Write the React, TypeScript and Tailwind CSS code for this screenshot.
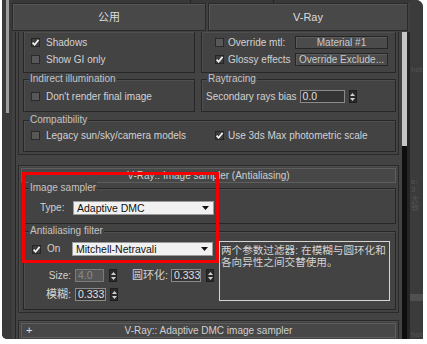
import React from "react";

const FONT = "font-[family-name:Liberation_Sans,Noto_Sans_CJK_SC,sans-serif]";

function Check({ on }: { on?: boolean }) {
  return (
    <span
      className={
        on
          ? "relative inline-block w-[9px] h-[9px] border border-[#262626] bg-[#3e3e3e] shrink-0"
          : "relative inline-block w-[9px] h-[9px] border border-[#2a2a2a] bg-[#585858] shrink-0"
      }
    >
      {on && (
        <svg viewBox="0 0 9 9" className="absolute -left-px -top-px w-[9px] h-[9px]">
          <path d="M1.6 4.6 L3.6 6.8 L7.6 1.9" stroke="#f2f2f2" strokeWidth="1.7" fill="none" />
        </svg>
      )}
    </span>
  );
}

function Spin() {
  return (
    <span className="flex flex-col items-center justify-center gap-[2px] w-[8px] h-[13px] bg-[#2b2b2b] border border-[#1e1e1e] shrink-0">
      <svg width="5" height="3" viewBox="0 0 5 3">
        <path d="M0 3 L2.5 0 L5 3Z" fill="#d0d0d0" />
      </svg>
      <svg width="5" height="3" viewBox="0 0 5 3">
        <path d="M0 0 L2.5 3 L5 0Z" fill="#d0d0d0" />
      </svg>
    </span>
  );
}

function Num({ v, w, dim }: { v: string; w: string; dim?: boolean }) {
  return (
    <span
      className={
        (dim
          ? "bg-[#565656] text-[#8c8c8c] border-[#7a7a7a] "
          : "bg-[#353535] text-[#e0e0e0] border-[#8a8a8a] ") +
        w +
        " h-[13px] border flex items-center pl-[2px] text-[10.5px] leading-none shrink-0 overflow-hidden"
      }
    >
      {v}
    </span>
  );
}

function Drop({ v }: { v: string }) {
  return (
    <span className="w-[141px] h-[14px] bg-[#f1f1f1] border border-[#9a9a9a] flex items-center pl-[3px] pr-[4px] text-[10.5px] leading-none text-[#111] shrink-0">
      <span className="flex-1">{v}</span>
      <svg width="7" height="4" viewBox="0 0 7 4">
        <path d="M0 0 L7 0 L3.5 4Z" fill="#111" />
      </svg>
    </span>
  );
}

function Btn({ v }: { v: string }) {
  return (
    <span className="w-[93px] h-[13px] bg-[#4b4b4b] border border-[#262626] shadow-[inset_1px_1px_0_#5c5c5c] flex items-center justify-center text-[10px] leading-none text-[#c9c9c9] shrink-0">
      {v}
    </span>
  );
}

function Group({
  label,
  className,
  children,
}: {
  label?: string;
  className: string;
  children?: React.ReactNode;
}) {
  return (
    <div className={"relative shrink-0 border border-[#272727] shadow-[inset_1px_1px_0_#4f4f4f] " + className}>
      {label && (
        <span className="absolute -top-[7px] left-[5px] px-[1px] bg-[#434343] text-[10px] leading-[12px] text-[#c4c4c4]">
          {label}
        </span>
      )}
      {children}
    </div>
  );
}

function Row({ children, className }: { children: React.ReactNode; className?: string }) {
  return <div className={"flex items-center h-[17px] " + (className ?? "")}>{children}</div>;
}

function Txt({ children, className }: { children: React.ReactNode; className?: string }) {
  return <span className={"text-[10px] leading-none text-[#d2d2d2] whitespace-nowrap " + (className ?? "")}>{children}</span>;
}

function RollHeader({ title, plus }: { title: string; plus?: boolean }) {
  return (
    <div className="relative shrink-0 mx-[2px] mt-[2px] h-[15px] bg-[#474747] border border-[#5e5e5e] flex items-center justify-center text-[10px] leading-none text-[#cfcfcf]">
      {plus && <span className="absolute left-[4px] top-[1px] text-[11px] leading-none text-[#e0e0e0]">+</span>}
      {title}
    </div>
  );
}

export default function App() {
  return (
    <div className={"relative w-[427px] h-[344px] bg-white pl-[2px] pr-[4px] pb-[5px] overflow-hidden " + FONT}>
      <div className="h-full flex bg-[#3c3c3c] rounded-tr-[7px] rounded-bl-[5px] overflow-hidden">
        {/* left strip */}
        <div className="w-[10px] shrink-0 h-full bg-[#3a3a3a] flex">
          <div className="ml-[4px] w-[3px] h-[113px] bg-[#9c9c9c]" />
        </div>

        {/* center column */}
        <div className="w-[398px] shrink-0 h-full flex flex-col bg-[#414141]">
          <div className="h-[3px] shrink-0 bg-[#383838] flex">
            <div className="ml-[178px] w-px h-full bg-[#222]" />
            <div className="ml-[82px] w-px h-full bg-[#222]" />
          </div>
          <div className="h-[28px] shrink-0 flex gap-[2px]">
            <div className="w-[194px] h-full bg-[#484848] border border-[#2a2a2a] shadow-[inset_1px_1px_0_#565656] flex items-center justify-center text-[11px] leading-none text-[#dcdcdc]">
              公用
            </div>
            <div className="w-[200px] h-full bg-[#484848] border border-[#2a2a2a] shadow-[inset_1px_1px_0_#565656] flex items-center justify-center text-[11px] leading-none text-[#dcdcdc]">
              V-Ray
            </div>
          </div>
          <div className="mt-px flex-1 min-h-0 flex overflow-hidden">
            {/* content */}
            <div className="w-[390px] h-full pl-[3px] bg-[#414141]">
              <div className="h-full flex flex-col border-l border-[#262626] pl-[2px] bg-[#434343]">
                {/* rollout 1 (scrolled) */}
                <div className="shrink-0 w-[381px] h-[123px] border-x border-b border-[#2a2a2a] pl-[4px] pr-[2px] pb-[2px] flex flex-col">
                  <div className="shrink-0 flex gap-[6px] h-[41px]">
                    <Group className="w-[172px] h-full border-t-0 pl-[7px] pt-[2px]">
                      <Row>
                        <Check on />
                        <Txt className="ml-[6px]">Shadows</Txt>
                      </Row>
                      <Row>
                        <Check />
                        <Txt className="ml-[6px]">Show GI only</Txt>
                      </Row>
                    </Group>
                    <Group className="w-[195px] h-full border-t-0 pl-[13px] pr-[7px] pt-[2px]">
                      <Row>
                        <Check />
                        <Txt className="ml-[4px]">Override mtl:</Txt>
                        <span className="ml-auto">
                          <Btn v="Material #1" />
                        </span>
                      </Row>
                      <Row>
                        <Check on />
                        <Txt className="ml-[4px]">Glossy effects</Txt>
                        <span className="ml-auto">
                          <Btn v="Override Exclude..." />
                        </span>
                      </Row>
                    </Group>
                  </div>
                  <div className="shrink-0 mt-[6px] flex gap-[6px] h-[33px]">
                    <Group label="Indirect illumination" className="w-[172px] h-full pl-[7px] pt-[8px]">
                      <Row>
                        <Check />
                        <Txt className="ml-[6px]">Don't render final image</Txt>
                      </Row>
                    </Group>
                    <Group label="Raytracing" className="w-[195px] h-full pl-[4px] pt-[8px]">
                      <Row>
                        <Txt>Secondary rays bias</Txt>
                        <span className="ml-[3px]">
                          <Num v="0.0" w="w-[45px]" />
                        </span>
                        <span className="ml-[4px]">
                          <Spin />
                        </span>
                      </Row>
                    </Group>
                  </div>
                  <Group label="Compatibility" className="mt-[8px] w-[373px] h-[32px] pl-[7px] pt-[6px]">
                    <Row>
                      <span className="w-[184px] flex items-center">
                        <Check />
                        <Txt className="ml-[6px]">Legacy sun/sky/camera models</Txt>
                      </span>
                      <Check on />
                      <Txt className="ml-[4px]">Use 3ds Max photometric scale</Txt>
                    </Row>
                  </Group>
                </div>

                {/* rollout 2 */}
                <div className="shrink-0 mt-[10px] w-[381px] h-[148px] border border-[#2a2a2a] shadow-[inset_1px_1px_0_#4e4e4e] flex flex-col">
                  <RollHeader title="V-Ray:: Image sampler (Antialiasing)" />
                  <div className="pl-[4px] pr-[2px]">
                    <Group label="Image sampler" className="mt-[5px] w-[373px] h-[36px] pl-[16px] pt-[12px]">
                      <div className="flex items-center h-[14px]">
                        <Txt className="w-[33px] text-[10.5px]">Type:</Txt>
                        <Drop v="Adaptive DMC" />
                      </div>
                    </Group>
                    <Group label="Antialiasing filter" className="mt-[7px] w-[373px] h-[79px] flex pt-[9px]">
                      <div className="w-[195px] flex flex-col">
                        <div className="mt-[1px] flex items-center h-[14px] pl-[8px]">
                          <span className="w-[40px] flex items-center">
                            <Check on />
                            <Txt className="ml-[6px] text-[10.5px]">On</Txt>
                          </span>
                          <Drop v="Mitchell-Netravali" />
                        </div>
                        <div className="mt-[13px] flex items-center h-[13px]">
                          <Txt className="w-[47px] text-right text-[#8e8e8e]">Size:</Txt>
                          <span className="ml-[4px]">
                            <Num v="4.0" w="w-[29px]" dim />
                          </span>
                          <span className="ml-[5px]">
                            <Spin />
                          </span>
                          <Txt className="ml-[15px] w-[38px] text-[11px]">圆环化:</Txt>
                          <span className="ml-[1px]">
                            <Num v="0.333" w="w-[30px]" />
                          </span>
                          <span className="ml-[5px]">
                            <Spin />
                          </span>
                        </div>
                        <div className="mt-[6px] flex items-center h-[13px]">
                          <Txt className="w-[47px] text-right text-[11px]">模糊:</Txt>
                          <span className="ml-[4px]">
                            <Num v="0.333" w="w-[31px]" />
                          </span>
                          <span className="ml-[4px]">
                            <Spin />
                          </span>
                        </div>
                      </div>
                      <div className="w-[171px] h-[60px] border border-[#d4d4d4] bg-[#434343] pl-[1px] pt-[2px] text-[10.6px] leading-[12px] text-[#d4d4d4] whitespace-nowrap">
                        两个参数过滤器: 在模糊与圆环化和
                        <br />
                        各向异性之间交替使用。
                      </div>
                    </Group>
                  </div>
                </div>

                {/* rollout 3 */}
                <div className="shrink-0 mt-[7px] w-[381px] h-[40px] border border-[#2a2a2a] shadow-[inset_1px_1px_0_#4e4e4e]">
                  <RollHeader title="V-Ray:: Adaptive DMC image sampler" plus />
                </div>
              </div>
            </div>
            {/* scrollbar */}
            <div className="w-[5px] shrink-0 h-full flex flex-col bg-[#0e0e0e]">
              <div className="h-[114px] bg-[#c6c6c6]" />
            </div>
            <div className="w-[3px] shrink-0 h-full bg-[#262626]" />
          </div>
        </div>

        {/* right strip */}
        <div className="flex-1 h-full bg-[#3b3b3b] flex flex-col pt-[66px] text-[8px] leading-none text-[#545454] overflow-hidden">
          <span className="pl-[1px]">hot</span>
          <span className="mt-[104px] pl-[1px]">e: 3</span>
          <span className="mt-[2px] pl-[1px]">大致</span>
          <div className="mt-[82px] h-[7px] bg-[#505050]" />
          <span className="mt-[30px] pl-[1px]">hot</span>
        </div>
      </div>

      {/* red highlight */}
      <div className="absolute left-[22px] top-[172px] w-[197px] h-[91px] border-[3px] border-[#f40000] pointer-events-none" />
    </div>
  );
}
